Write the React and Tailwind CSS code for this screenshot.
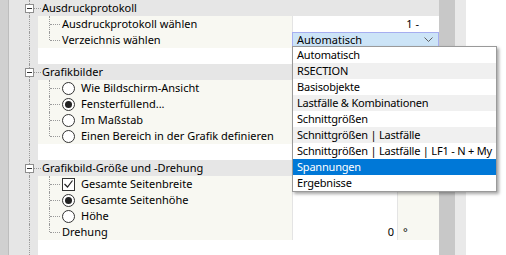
import React from "react";

const groups = [
  {
    title: "Ausdruckprotokoll",
    items: [
      { kind: "text", label: "Ausdruckprotokoll wählen", value: "1 -", wide: true },
      { kind: "text", label: "Verzeichnis wählen", combo: true },
    ],
  },
  {
    title: "Grafikbilder",
    items: [
      { kind: "radio", label: "Wie Bildschirm-Ansicht" },
      { kind: "radio", label: "Fensterfüllend...", checked: true },
      { kind: "radio", label: "Im Maßstab" },
      { kind: "radio", label: "Einen Bereich in der Grafik definieren" },
    ],
  },
  {
    title: "Grafikbild-Größe und -Drehung",
    items: [
      { kind: "check", label: "Gesamte Seitenbreite", checked: true },
      { kind: "radio", label: "Gesamte Seitenhöhe", checked: true },
      { kind: "radio", label: "Höhe" },
      { kind: "text", label: "Drehung", value: "0", unit: "°" },
    ],
    last: true,
  },
];

const options = [
  "Automatisch",
  "RSECTION",
  "Basisobjekte",
  "Lastfälle & Kombinationen",
  "Schnittgrößen",
  "Schnittgrößen | Lastfälle",
  "Schnittgrößen | Lastfälle | LF1 - N + My",
  "Spannungen",
  "Ergebnisse",
];

function Gutter({ header }) {
  return (
    <div className="relative w-[29px] shrink-0 bg-[#e6e6e6]">
      <div className="absolute inset-y-0 left-[20px] border-l border-dotted border-[#9a9a9a]" />
      {header && (
        <>
          <div className="absolute left-[25px] top-[8px] z-10 w-[7px] border-t border-dotted border-[#9a9a9a]" />
          <div className="absolute left-[16px] top-[4px] flex size-[9px] items-center justify-center border border-[#8e8e8e] bg-white">
            <div className="h-px w-[5px] bg-[#333]" />
          </div>
        </>
      )}
    </div>
  );
}

function Radio({ checked }) {
  return (
    <div className="flex size-[13px] shrink-0 items-center justify-center rounded-full border border-[#333] bg-white">
      {checked && <div className="size-[7px] rounded-full bg-[#222]" />}
    </div>
  );
}

function Check({ checked }) {
  return (
    <div className="flex size-[13px] shrink-0 items-center justify-center border border-[#333] bg-white">
      {checked && (
        <svg width="9" height="8" viewBox="0 0 9 8">
          <polyline points="0.5,4 3.5,7 8.5,0.5" fill="none" stroke="#222" strokeWidth="1.2" />
        </svg>
      )}
    </div>
  );
}

function Header({ title }) {
  return (
    <div className="flex h-4">
      <Gutter header />
      <div className="flex flex-1 items-center bg-[#e6e6e6] pl-[4px] leading-4">{title}</div>
    </div>
  );
}

function ItemRow({ item, isLast, cream }) {
  return (
    <div className="flex h-4 leading-4">
      <Gutter />
      <div className="relative flex w-[254px] shrink-0 items-center bg-[#f8f8f2] pl-[24px]">
        <div
          className={`absolute left-[11px] top-0 border-l border-dotted border-[#9a9a9a] ${
            isLast ? "h-[8px]" : "h-4"
          }`}
        />
        <div className="absolute left-[12px] top-[8px] w-[10px] border-t border-dotted border-[#9a9a9a]" />
        {item.kind === "radio" && <Radio checked={item.checked} />}
        {item.kind === "check" && <Check checked={item.checked} />}
        <span className={`whitespace-nowrap ${item.kind === "text" ? "" : "ml-[6px]"}`}>{item.label}</span>
      </div>
      {item.wide ? (
        <div className="flex w-[147px] justify-end border-l border-[#e4e4e4] bg-white pr-[20px]">{item.value}</div>
      ) : item.combo ? (
        <div className="w-[147px] bg-white">
          <div className="flex h-[15px] items-center justify-between border border-[#a6aef0] bg-[#cce4f7] pl-[4px] pr-[5px] leading-[13px]">
            <span>Automatisch</span>
            <svg width="9" height="5" viewBox="0 0 9 5">
              <polyline points="0.5,0.5 4.5,4.5 8.5,0.5" fill="none" stroke="#606060" />
            </svg>
          </div>
        </div>
      ) : (
        <>
          <div className="flex w-[105px] justify-end border-l border-[#e4e4e4] bg-white pr-[3px]">{item.value}</div>
          <div className={`w-[42px] border-l border-[#e4e4e4] pl-[5px] ${cream ? "bg-[#f8f8f2]" : "bg-white"}`}>
            {item.unit}
          </div>
        </>
      )}
    </div>
  );
}

function Blank() {
  return (
    <div className="flex h-4">
      <Gutter />
      <div className="flex-1 bg-white" />
    </div>
  );
}

export default function App() {
  return (
    <div className="relative flex h-[255px] w-[506px] overflow-hidden bg-white font-['Noto_Sans',sans-serif] text-[11px] text-black">
      <div className="w-2 shrink-0 bg-[#d0d0d0]" />
      <div className="w-px shrink-0 bg-[#bdbdbd]" />
      <div className="flex w-[430px] shrink-0 flex-col">
        {groups.map((g) => (
          <React.Fragment key={g.title}>
            <Header title={g.title} />
            {g.items.map((item, i) => (
              <ItemRow key={item.label} item={item} isLast={i === g.items.length - 1} cream={g.last} />
            ))}
            {!g.last && <Blank />}
          </React.Fragment>
        ))}
        <div className="flex flex-1">
          <Gutter />
          <div className="flex-1 bg-white" />
        </div>
      </div>
      <div className="w-4 shrink-0 bg-[#c8c8c8]" />
      <div className="w-[11px] shrink-0 bg-[#e9e9e9]" />
      <div className="flex-1 bg-white" />

      <div className="absolute left-[292px] top-[46px] w-[205px] border border-[#9a9a9a] bg-white tracking-[-0.2px] shadow-[2px_2px_3px_rgba(0,0,0,0.35)]">
        {options.map((o, i) => (
          <div
            key={o}
            className={`h-4 whitespace-nowrap pl-[4px] leading-4 ${
              o === "Spannungen" ? "bg-[#0078d7] text-white" : i % 2 ? "bg-[#f0f0f0]" : "bg-white"
            }`}
          >
            {o}
          </div>
        ))}
      </div>
    </div>
  );
}
